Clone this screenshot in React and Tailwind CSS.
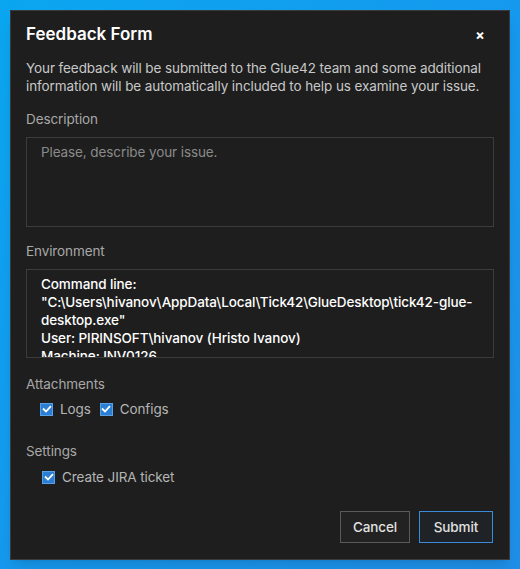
import React, { useState } from 'react'

function Check({ checked, onChange, label }) {
  return (
    <label className="flex items-center gap-[7px] cursor-pointer">
      <span
        onClick={onChange}
        className="w-[13px] h-[13px] bg-[#2a7fd4] border border-[#5aa0e6] flex items-center justify-center"
      >
        {checked && (
          <svg viewBox="0 0 12 12" className="w-[10px] h-[10px]">
            <path d="M2 6.2 L4.8 9 L10 3.4" fill="none" stroke="white" strokeWidth="2.2" strokeLinecap="square" />
          </svg>
        )}
      </span>
      <span className="text-[#b5b5b5]">{label}</span>
    </label>
  )
}

export default function App() {
  const [logs, setLogs] = useState(true)
  const [configs, setConfigs] = useState(true)
  const [jira, setJira] = useState(true)

  const font = { fontFamily: '"Inter", "Noto Sans", sans-serif' }

  return (
    <div className="w-[520px] h-[569px] bg-gradient-to-br from-[#0aa6f0] via-[#1599ee] to-[#1f8fe8] p-[10px]" style={font}>
      <div className="w-[500px] h-[550px] bg-[#1e1e1e] border border-[#3a3a3a] shadow-lg flex flex-col px-[15px] text-[13.5px] tracking-[-0.1px]">
        <div className="flex items-center justify-between h-[46px] pt-[2px]">
          <h1 className="text-[17px] font-semibold text-white tracking-normal">Feedback Form</h1>
          <button className="text-white text-[14px] font-bold w-[16px] mr-[6px] leading-none">×</button>
        </div>
        <p className="text-[#c8c8c8] leading-[18px] mt-[2px] pr-[4px]">
          Your feedback will be submitted to the Glue42 team and some additional information will be automatically included to help us examine your issue.
        </p>

        <div className="text-[#a8a8a8] mt-[15px] leading-[18px]">Description</div>
        <textarea
          placeholder="Please, describe your issue."
          className="mt-[9px] w-[468px] h-[90px] bg-[#1e1e1e] border border-[#3c3c3c] resize-none px-[14px] py-[5px] leading-[18px] text-[#c8c8c8] placeholder:text-[#8a8a8a] outline-none"
        />

        <div className="text-[#a8a8a8] mt-[15px] leading-[18px]">Environment</div>
        <div className="mt-[9px] w-[468px] h-[89px] border border-[#3c3c3c] overflow-hidden px-[14px] pt-[5px] leading-[18px] text-white font-medium">
          <div>Command line:</div>
          <div className="whitespace-nowrap">"C:\Users\hivanov\AppData\Local\Tick42\GlueDesktop\tick42-glue-</div>
          <div>desktop.exe"</div>
          <div>User: PIRINSOFT\hivanov (Hristo Ivanov)</div>
          <div>Machine: INV0126</div>
          <div>OS: Windows 10</div>
        </div>

        <div className="text-[#a8a8a8] mt-[17px] leading-[18px]">Attachments</div>
        <div className="flex items-center gap-[9px] ml-[14px] mt-[6px]">
          <Check checked={logs} onChange={() => setLogs(!logs)} label="Logs" />
          <Check checked={configs} onChange={() => setConfigs(!configs)} label="Configs" />
        </div>

        <div className="text-[#a8a8a8] mt-[23px] leading-[18px]">Settings</div>
        <div className="flex items-center ml-[16px] mt-[7px]">
          <Check checked={jira} onChange={() => setJira(!jira)} label="Create JIRA ticket" />
        </div>

        <div className="flex justify-end gap-[9px] mt-auto mb-[16px] mr-[1px]">
          <button className="w-[70px] h-[32px] border border-[#5a5a5a] bg-[#222222] text-[#e0e0e0] font-medium">Cancel</button>
          <button className="w-[74px] h-[32px] border border-[#3a8ad8] bg-[#1f2327] text-[#e0e0e0] font-medium">Submit</button>
        </div>
      </div>
    </div>
  )
}
